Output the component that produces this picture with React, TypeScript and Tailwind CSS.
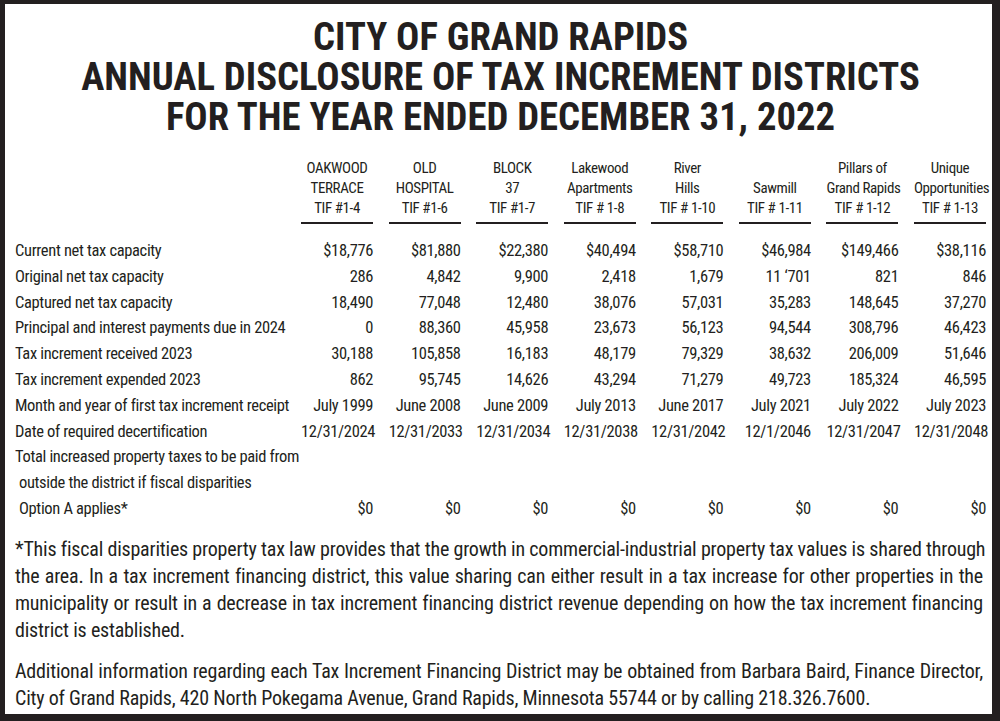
const columns = [
  ['OAKWOOD', 'TERRACE', 'TIF #1-4'],
  ['OLD', 'HOSPITAL', 'TIF #1-6'],
  ['BLOCK', '37', 'TIF #1-7'],
  ['Lakewood', 'Apartments', 'TIF # 1-8'],
  ['River', 'Hills', 'TIF # 1-10'],
  ['', 'Sawmill', 'TIF # 1-11'],
  ['Pillars of', 'Grand Rapids', 'TIF # 1-12'],
  ['Unique', 'Opportunities', 'TIF # 1-13'],
]

type Row = { label: string; indent?: boolean; values?: string[] }

const rows: Row[] = [
  { label: 'Current net tax capacity', values: ['$18,776', '$81,880', '$22,380', '$40,494', '$58,710', '$46,984', '$149,466', '$38,116'] },
  { label: 'Original net tax capacity', values: ['286', '4,842', '9,900', '2,418', '1,679', '11 \u2018701', '821', '846'] },
  { label: 'Captured net tax capacity', values: ['18,490', '77,048', '12,480', '38,076', '57,031', '35,283', '148,645', '37,270'] },
  { label: 'Principal and interest payments due in 2024', values: ['0', '88,360', '45,958', '23,673', '56,123', '94,544', '308,796', '46,423'] },
  { label: 'Tax increment received 2023', values: ['30,188', '105,858', '16,183', '48,179', '79,329', '38,632', '206,009', '51,646'] },
  { label: 'Tax increment expended 2023', values: ['862', '95,745', '14,626', '43,294', '71,279', '49,723', '185,324', '46,595'] },
  { label: 'Month and year of first tax increment receipt', values: ['July 1999', 'June 2008', 'June 2009', 'July 2013', 'June 2017', 'July 2021', 'July 2022', 'July 2023'] },
  { label: 'Date of required decertification', values: ['12/31/2024', '12/31/2033', '12/31/2034', '12/31/2038', '12/31/2042', '12/1/2046', '12/31/2047', '12/31/2048'] },
  { label: 'Total increased property taxes to be paid from' },
  { label: 'outside the district if fiscal disparities', indent: true },
  { label: 'Option A applies*', indent: true, values: ['$0', '$0', '$0', '$0', '$0', '$0', '$0', '$0'] },
]

const note1 = [
  '*This fiscal disparities property tax law provides that the growth in commercial-industrial property tax values is shared through',
  'the area. In a tax increment financing district, this value sharing can either result in a tax increase for other properties in the',
  'municipality or result in a decrease in tax increment financing district revenue depending on how the tax increment financing',
]

const note2 = 'Additional information regarding each Tax Increment Financing District may be obtained from Barbara Baird, Finance Director,'

export default function App() {
  return (
    <div className="w-[1000px] h-[721px] bg-[#231f20] pt-[4px] pl-[5px] pr-[8px] pb-[7px] font-['Roboto_Condensed',sans-serif] text-[#231f20]">
      <div className="h-full bg-white pt-[13px] pl-[10px] pr-[6px]">
        {/* Title */}
        <div className="text-center font-bold text-[38.7px] leading-[40px]">
          <div>CITY OF GRAND RAPIDS</div>
          <div>ANNUAL DISCLOSURE OF TAX INCREMENT DISTRICTS</div>
          <div>FOR THE YEAR ENDED DECEMBER 31, 2022</div>
        </div>

        {/* Table */}
        <div className="mt-[21px] grid grid-cols-[minmax(0,1fr)_repeat(8,72px)] gap-x-[15.57px]">
          <div />
          {columns.map((col, i) => (
            <div key={i} className="border-b-2 border-[#231f20] pb-[4px] text-center text-[15px] leading-[20px] tracking-[-0.4px]">
              {col.map((line, j) => (
                <div key={j} className="whitespace-nowrap h-[20px]">{line}</div>
              ))}
            </div>
          ))}
        </div>

        <div className="mt-[14px] text-[16.5px] leading-[25.8px] tracking-[-0.34px]">
          {rows.map((row) => (
            <div key={row.label} className="grid grid-cols-[minmax(0,1fr)_repeat(8,72px)] gap-x-[15.57px]">
              <div className={row.indent ? 'pl-[4px] whitespace-nowrap' : 'whitespace-nowrap'}>{row.label}</div>
              {(row.values ?? Array(8).fill('')).map((v, i) => (
                <div key={i} className="text-right whitespace-nowrap">{v}</div>
              ))}
            </div>
          ))}
        </div>

        {/* Notes */}
        <div className="mt-[14px] pr-[3px] text-[20px] leading-[27px] tracking-[-0.2px]">
          {note1.map((line) => (
            <div key={line} className="whitespace-nowrap text-justify [text-align-last:justify]">{line}</div>
          ))}
          <div>district is established.</div>
          <div className="mt-[14px] whitespace-nowrap text-justify [text-align-last:justify]">{note2}</div>
          <div>City of Grand Rapids, 420 North Pokegama Avenue, Grand Rapids, Minnesota 55744 or by calling 218.326.7600.</div>
        </div>
      </div>
    </div>
  )
}
